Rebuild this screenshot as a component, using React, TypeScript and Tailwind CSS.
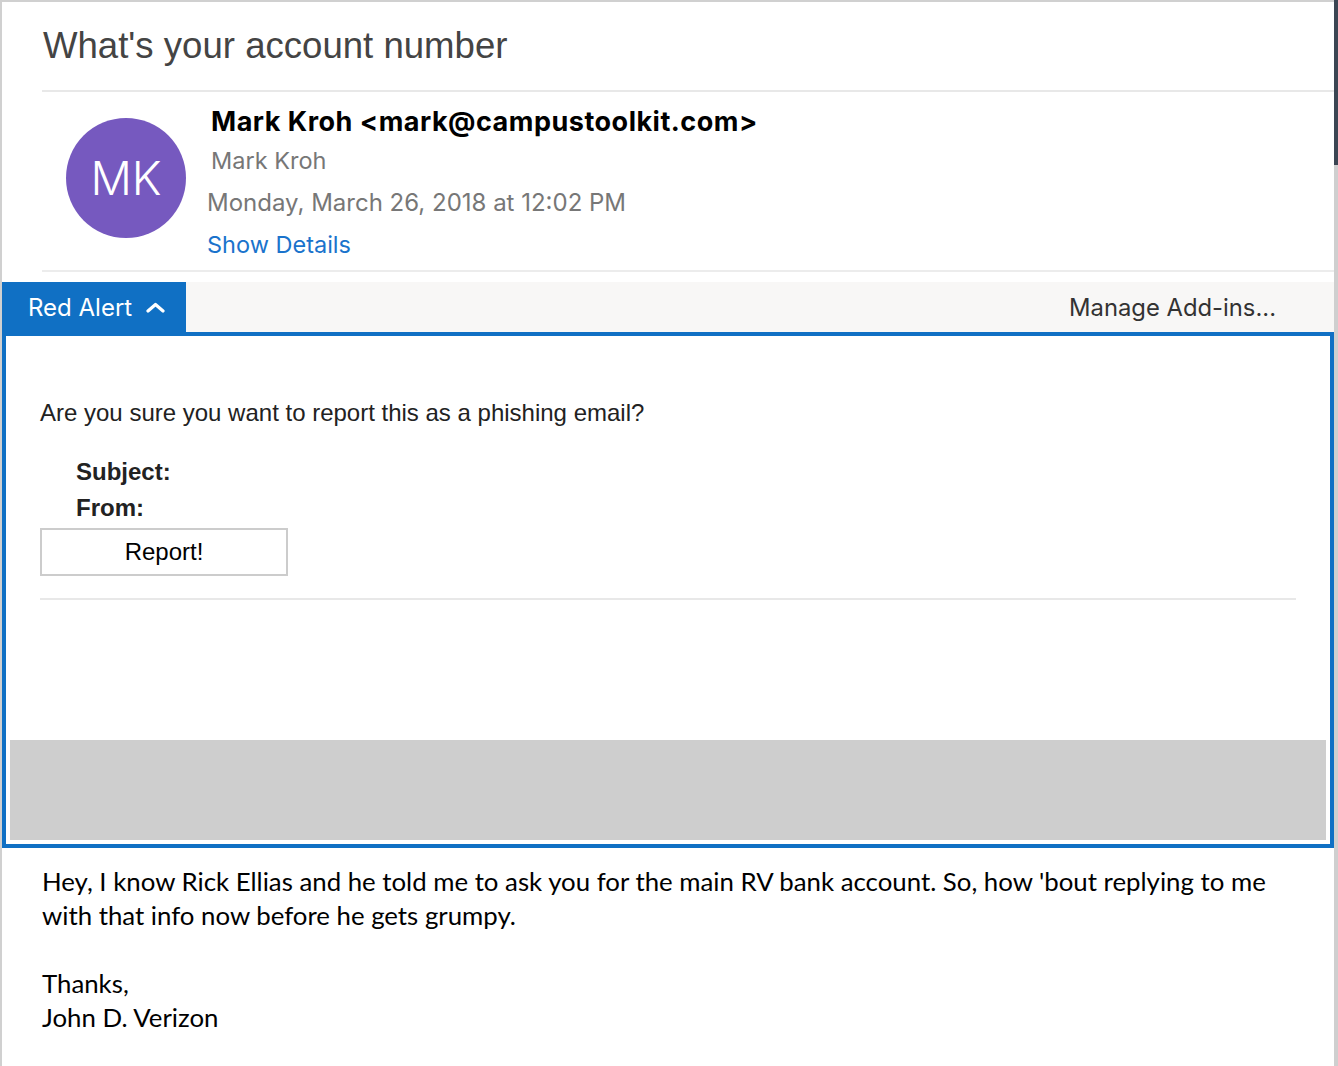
import React from 'react'

const HEADER_FONT = "font-['Inter',sans-serif]"
const PANEL_FONT = "font-['Liberation_Sans',Arial,sans-serif]"
const BODY_FONT = "font-['Lato',sans-serif]"

function ChevronUp() {
  return (
    <svg width="19" height="11" viewBox="0 0 19 11" fill="none">
      <polyline points="2,9 9.5,2.5 17,9" stroke="#fff" strokeWidth="3.2" strokeLinecap="round" strokeLinejoin="round" />
    </svg>
  )
}

function MessageHeader() {
  return (
    <div className="flex h-[178px] pl-[64px]">
      <div className="mt-[26px] flex h-[120px] w-[120px] shrink-0 items-center justify-center rounded-full bg-[#7659bf]">
        <span className={`${HEADER_FONT} text-[46px] font-light leading-none text-white`}>MK</span>
      </div>
      <div className={`${HEADER_FONT} ml-[21px] pt-[13px]`}>
        <div className="mb-[1px] pl-[4px] text-[27px] font-bold leading-[34px] tracking-[0.5px] text-black">
          Mark Kroh &lt;mark@campustoolkit.com&gt;
        </div>
        <div className="pl-[4px] text-[23.5px] leading-[42px] text-[#777]">Mark Kroh</div>
        <div className="text-[24px] leading-[42px] text-[#777]">Monday, March 26, 2018 at 12:02 PM</div>
        <div className="text-[23.5px] leading-[42px] text-[#1a73cc]">Show Details</div>
      </div>
    </div>
  )
}

function AddinPanel() {
  return (
    <div className="border-[4px] border-[#1070c4] bg-white">
      <div className={`${PANEL_FONT} h-[404px] px-[34px] pt-[63px] text-[24px] text-[#222]`}>
        <p className="leading-[28px]">Are you sure you want to report this as a phishing email?</p>
        <div className="mt-[27px] pl-[36px] font-bold">
          <div className="leading-[36px]">Subject:</div>
          <div className="leading-[36px]">From:</div>
        </div>
        <button className="mt-[2px] h-[48px] w-[248px] border-2 border-[#cccccc] bg-white text-[24px] text-black">
          Report!
        </button>
        <div className="mt-[22px] h-[2px] bg-[#e8e8e8]" />
      </div>
      <div className="mx-[4px] mb-[4px] h-[100px] bg-[#cecece]" />
    </div>
  )
}

export default function App() {
  return (
    <div className="flex h-[1066px] w-[1338px] overflow-hidden bg-white">
      <div className="w-[2px] shrink-0 bg-[#d0d0d0]" />
      <div className="flex w-[1332px] flex-col">
        <div className="h-[2px] shrink-0 bg-[#d0d0d0]" />
        <div className="h-[88px] pl-[41px] font-['Liberation_Sans',Arial,sans-serif] text-[36.6px] leading-[88px] text-[#444]">
          What's your account number
        </div>
        <div className="ml-[40px] h-[2px] bg-[#e8e8e8]" />
        <MessageHeader />
        <div className="ml-[40px] h-[2px] bg-[#ececec]" />
        <div className="h-[10px]" />
        <div className={`${HEADER_FONT} flex h-[50px] items-stretch justify-between bg-[#f8f7f6]`}>
          <div className="flex w-[184px] items-center bg-[#1070c4] pl-[26px] pt-[2px] text-[24px] text-white">
            <span>Red Alert</span>
            <span className="ml-[14px] mt-[-2px] flex">
              <ChevronUp />
            </span>
          </div>
          <div className="flex items-center pr-[58px] pt-[2px] text-[23.8px] text-[#333]">Manage Add-ins...</div>
        </div>
        <AddinPanel />
        <div className={`${BODY_FONT} whitespace-nowrap pl-[40px] pt-[16px] text-[25.8px] leading-[34px] text-black`}>
          <p>
            Hey, I know Rick Ellias and he told me to ask you for the main RV bank account. So, how 'bout replying to me
            <br />
            with that info now before he gets grumpy.
          </p>
          <p className="mt-[34px]">Thanks,</p>
          <p>John D. Verizon</p>
        </div>
      </div>
      <div className="flex w-[4px] shrink-0 flex-col">
        <div className="h-[165px] bg-[#3b4653]" />
        <div className="flex-1 bg-[#cfcfcf]" />
      </div>
    </div>
  )
}
